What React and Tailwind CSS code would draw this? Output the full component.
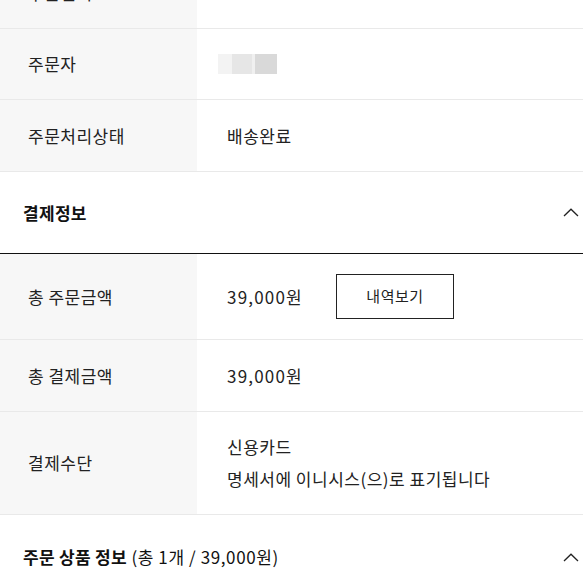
import React from 'react';

const font = { fontFamily: '"Noto Sans CJK KR", "Noto Sans", sans-serif' };

function Row({ label, h, children, extra = '' }) {
  return (
    <div className={`flex border-b border-[#e9e9e9] ${h} ${extra}`}>
      <div className="w-[197px] shrink-0 bg-[#f7f7f7] pl-7 flex items-center text-[17px] tracking-[0.5px] text-[#222]">{label}</div>
      <div className="flex-1 pl-[30px] flex items-center text-[17px] tracking-[0.5px] text-[#222]">{children}</div>
    </div>
  );
}

function Chevron() {
  return (
    <svg width="16" height="9" viewBox="0 0 16 9" fill="none" className="mr-[2px]">
      <path d="M1 8L8 1.2L15 8" stroke="#222" strokeWidth="1.3" />
    </svg>
  );
}

function Section({ children, h, extra = '' }) {
  return (
    <div className={`flex items-center justify-between pl-[23px] pr-[2px] ${h} ${extra}`}>
      <div className="text-[17px] tracking-[0.3px] text-[#111]">{children}</div>
      <Chevron />
    </div>
  );
}

export default function App() {
  return (
    <div className="w-[583px] h-[583px] overflow-hidden bg-white" style={font}>
      <Row label="주문일시" h="h-[72px]" extra="mt-[-43px]">
        <span className="text-[#ddd]">2023.00.00 00:00:00</span>
      </Row>
      <Row label="주문자" h="h-[71px]">
        <div className="flex items-stretch h-[20px] -ml-[9px]">
          <div className="w-[14px] bg-[#f3f3f3]" />
          <div className="w-[20px] bg-[#e6e6e6]" />
          <div className="w-[3px] bg-[#f0f0f0]" />
          <div className="w-[22px] bg-[#d9d9d9]" />
        </div>
      </Row>
      <Row label="주문처리상태" h="h-[72px]">배송완료</Row>
      <Section h="h-[82px]" extra="border-b border-[#111]">
        <span className="font-bold">결제정보</span>
      </Section>
      <Row label="총 주문금액" h="h-[86px]">
        <span className="tracking-[1.2px]">39,000원</span>
        <button className="ml-[33px] w-[118px] h-[45px] border border-[#222] bg-white text-[15px] tracking-[0.5px] text-[#222]">내역보기</button>
      </Row>
      <Row label="총 결제금액" h="h-[72px]">
        <span className="tracking-[1.2px]">39,000원</span>
      </Row>
      <Row label="결제수단" h="h-[103px]">
        <div className="leading-[32px]">
          <div>신용카드</div>
          <div>명세서에 이니시스(으)로 표기됩니다</div>
        </div>
      </Row>
      <Section h="h-[84px]">
        <span className="font-bold">주문 상품 정보</span>
        <span className="tracking-[0.6px]"> (총 1개 / 39,000원)</span>
      </Section>
    </div>
  );
}
